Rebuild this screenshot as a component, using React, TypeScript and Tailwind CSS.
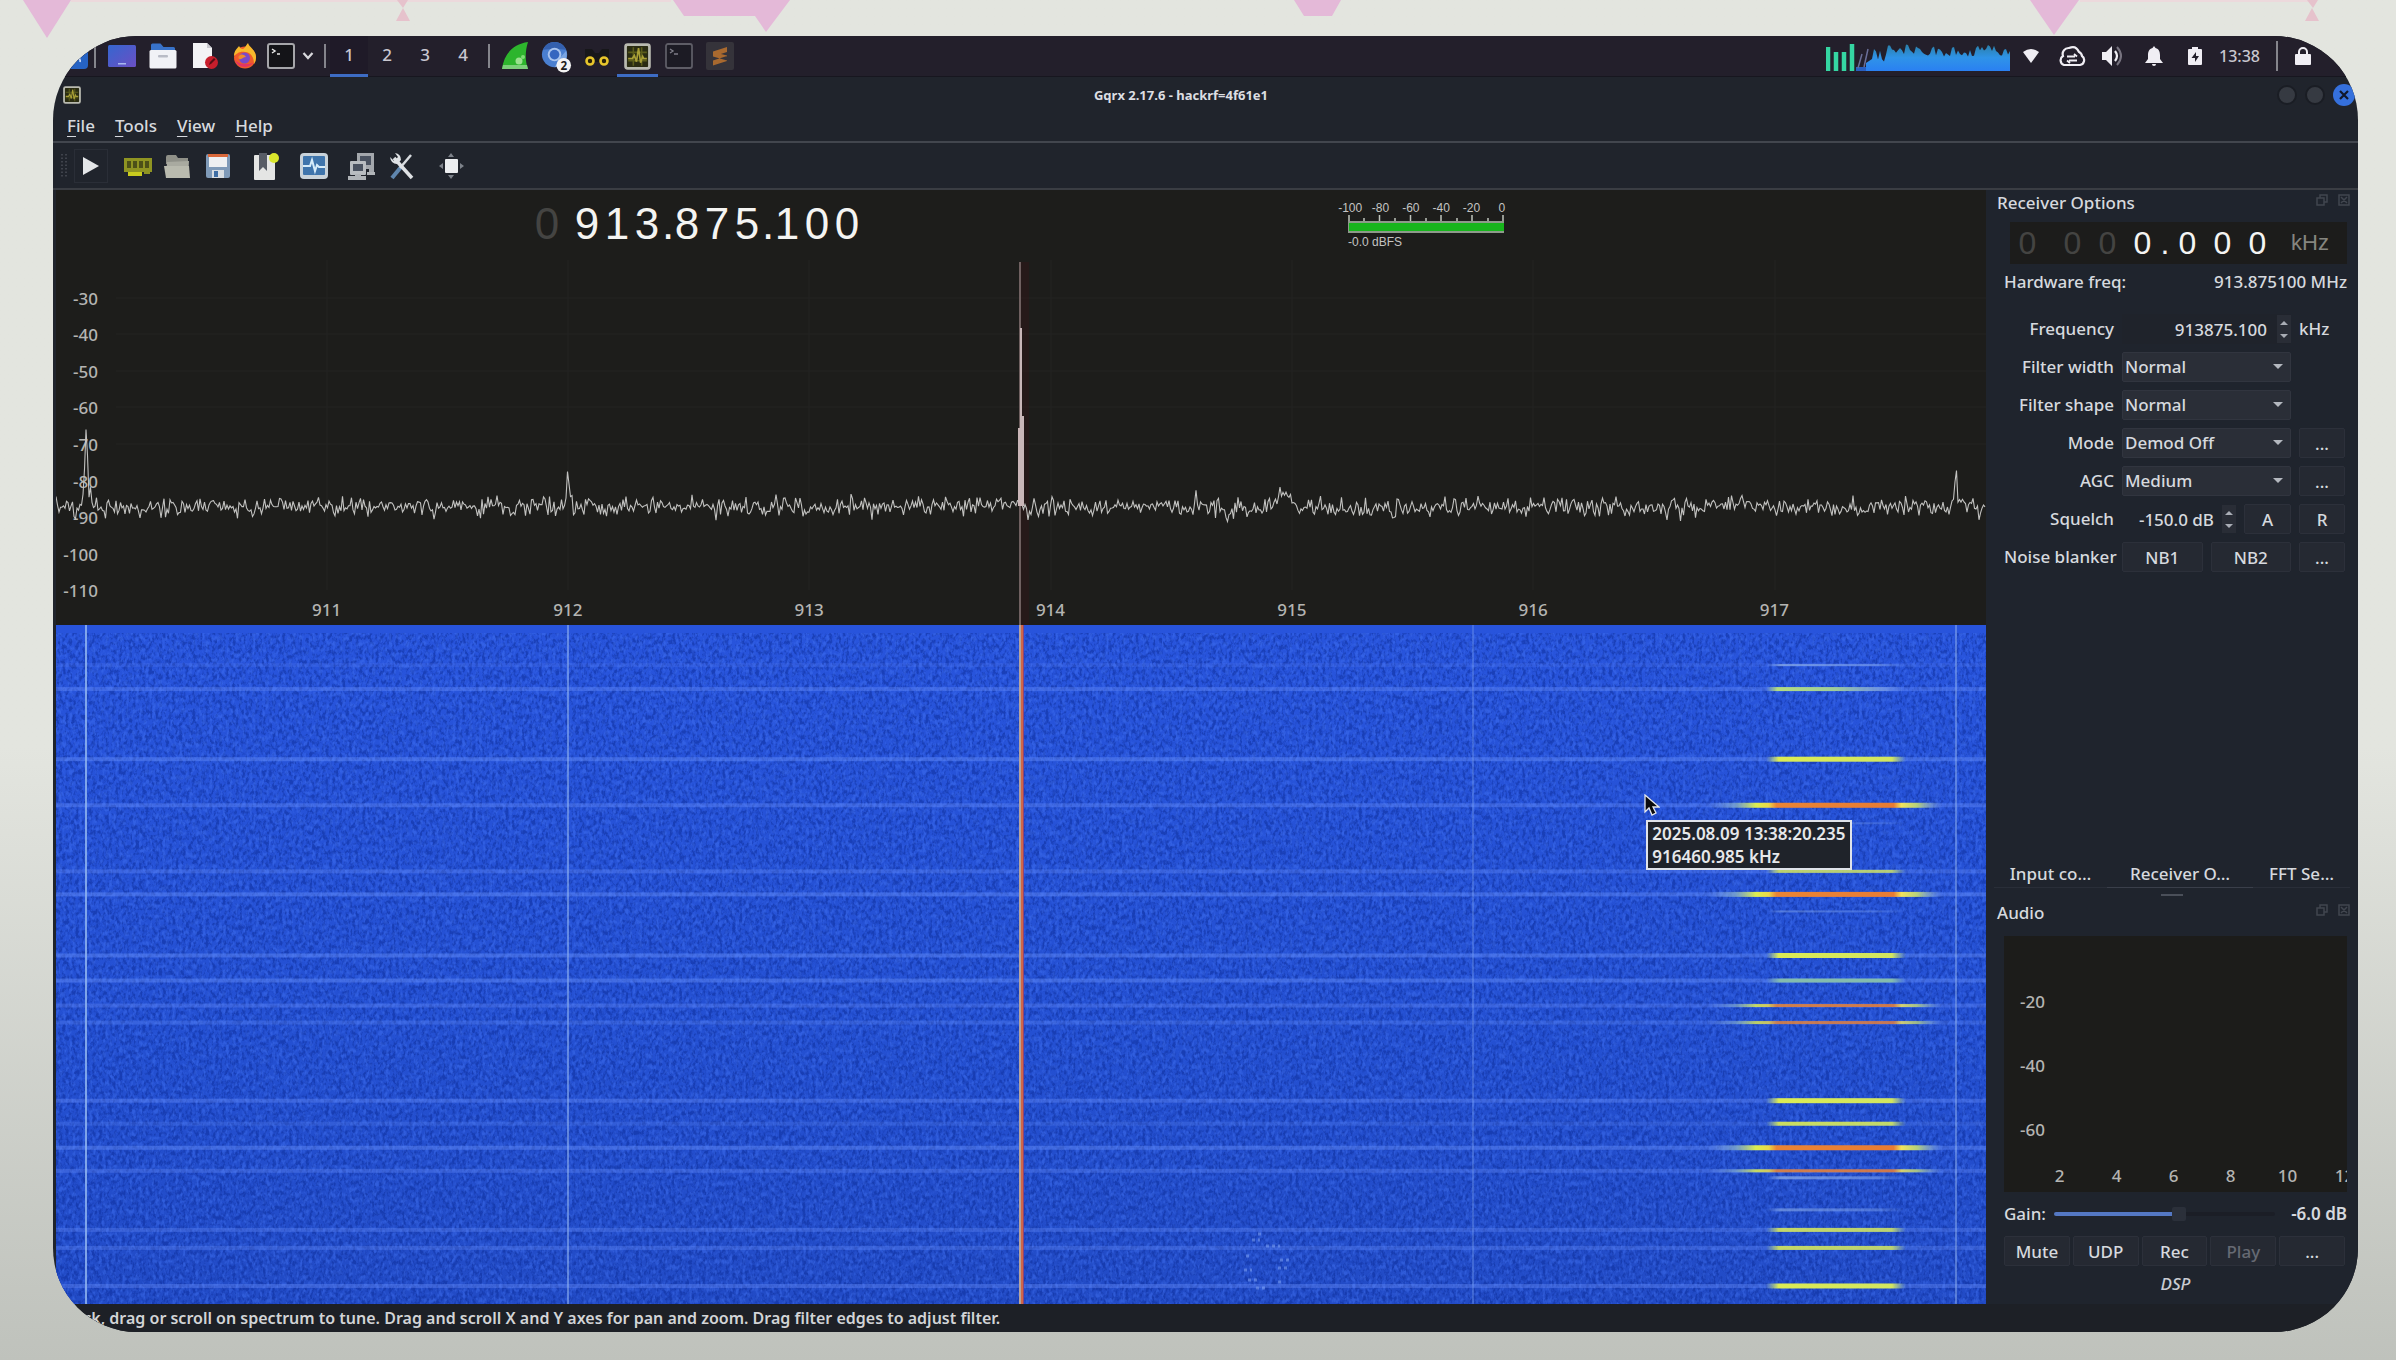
import { ReactNode, useState } from "react";
import clsx from "clsx";

interface Burst {
  y: number;
  h: number;
  kind: "weak" | "fade" | "green" | "yellow" | "orange";
  opacity?: number;
  line?: number;
}

const BURSTS: Burst[] = [
  { y: 40, h: 2, kind: "weak", line: 0.14 },
  { y: 64, h: 4, kind: "fade", line: 0.35 },
  { y: 134, h: 5, kind: "yellow", line: 0.4 },
  { y: 180, h: 5, kind: "orange", line: 0.35 },
  { y: 198, h: 2, kind: "weak", opacity: 0.5 },
  { y: 246, h: 3, kind: "yellow", opacity: 0.8, line: 0.3 },
  { y: 269, h: 5, kind: "orange", line: 0.4 },
  { y: 286, h: 2, kind: "weak", opacity: 0.6 },
  { y: 330, h: 5, kind: "yellow", line: 0.4 },
  { y: 355, h: 4, kind: "green", line: 0.4 },
  { y: 380, h: 3, kind: "orange", opacity: 0.85, line: 0.3 },
  { y: 397, h: 3, kind: "orange", opacity: 0.8, line: 0.25 },
  { y: 475, h: 5, kind: "yellow", line: 0.35 },
  { y: 498, h: 4, kind: "yellow", opacity: 0.9, line: 0.2 },
  { y: 522, h: 5, kind: "orange", line: 0.4 },
  { y: 545, h: 3, kind: "orange", opacity: 0.85, line: 0.3 },
  { y: 552, h: 3, kind: "weak" },
  { y: 584, h: 3, kind: "weak", opacity: 0.8 },
  { y: 604, h: 4, kind: "yellow", opacity: 0.85, line: 0.3 },
  { y: 622, h: 4, kind: "yellow", opacity: 0.85, line: 0.3 },
  { y: 660, h: 5, kind: "yellow", line: 0.35 },
];

const FILLS = {
  weak: "url(#weak)",
  fade: "url(#fade)",
  green: "url(#green)",
  yellow: "url(#yellow)",
  orange: "url(#orange)",
};

const DB_LABELS = [-30, -40, -50, -60, -70, -80, -90, -100, -110];
const MHZ_LABELS = [911, 912, 913, 914, 915, 916, 917];

function makeRandom(seed: number) {
  let s = seed;
  return () => {
    s = (s * 16807) % 2147483647;
    return s / 2147483647;
  };
}

// noise floor with a few narrow carriers on top
function tracePath() {
  const rnd = makeRandom(77);
  const peaks: [number, number, number][] = [
    [30, 78, 2],
    [512, 38, 2],
    [1228, 20, 5],
    [1900, 38, 2],
  ];
  let d = "";
  let drift = 0;
  for (let x = 0; x <= 1930; x += 1.5) {
    drift = drift * 0.6 + (rnd() - 0.5) * 5;
    let y = 317 + drift + (rnd() + rnd() + rnd() - 1.5) * 9;
    if (rnd() > 0.97) y += (rnd() - 0.5) * 16;
    for (const [px, h, w] of peaks) {
      const dist = Math.abs(x - px);
      if (dist < w) y -= h * (1 - dist / w / 2);
      else if (dist < w + 3) y -= 10;
    }
    d += `${x === 0 ? "M" : "L"}${x} ${y.toFixed(1)}`;
  }
  return d;
}

function loadPath() {
  const rnd = makeRandom(9);
  let d = "M10 30V22L16 18";
  for (let x = 18; x <= 154; x += 2) {
    const base = x < 32 ? 15 : 10;
    d += `L${x} ${(base - 7 + rnd() * 13).toFixed(1)}`;
  }
  return d + "V30Z";
}

const TRACE = tracePath();
const LOAD = loadPath();

function Divider({ className }: { className?: string }) {
  return <div className={clsx("h-6 w-0.5 shrink-0 bg-[#85858c]", className)} />;
}

function TaskButton({ label, active, children }: { label: string; active?: boolean; children: ReactNode }) {
  return (
    <button
      aria-label={label}
      className={clsx(
        "flex h-[41px] w-[41px] shrink-0 items-center justify-center border-y-[3px] border-transparent",
        active && "border-b-[#3d6cc4]"
      )}
    >
      {children}
    </button>
  );
}

function GqrxIcon({ className }: { className: string }) {
  return (
    <svg viewBox="0 0 26 26" className={className}>
      <rect x="1.5" y="1.5" width="23" height="23" rx="2" fill="#2a2c12" stroke="#b9bab0" strokeWidth="2.6" />
      <path d="M4 9h18M4 17h18M9 4v18M17 4v18" stroke="#5c5e1c" strokeWidth="1.5" />
      <path d="M4 15h4l2-3 2 6 2-13 2 14 2-6 1 2h3" stroke="#a89f36" strokeWidth="1.6" fill="none" />
    </svg>
  );
}

function Taskbar() {
  const [desk, setDesk] = useState(1);
  return (
    <div className="flex h-[41px] shrink-0 items-center border-b border-[#17161f] bg-[#231f2b]">
      <button aria-label="Applications" className="ml-[9px] shrink-0">
        <svg viewBox="0 0 26 26" className="h-[26px] w-[26px]">
          <rect width="26" height="26" rx="4" fill="#2663c4" />
          <path d="M6 8c6-2 10 0 11 4M10 12c4-1 9 1 8 7" stroke="#dfe9ff" strokeWidth="1.6" fill="none" />
        </svg>
      </button>
      <Divider className="mr-[5px] ml-1.5" />
      <TaskButton label="Show desktop">
        <svg viewBox="0 0 28 22" className="h-[22px] w-[28px]">
          <defs>
            <linearGradient id="desk" x1="0" y1="0" x2="1" y2="1">
              <stop offset="0" stopColor="#3566cf" />
              <stop offset="1" stopColor="#6b4fc4" />
            </linearGradient>
          </defs>
          <rect width="28" height="22" rx="1.5" fill="url(#desk)" />
          <rect x="10" y="18" width="8" height="1.5" fill="#a9b8f0" />
        </svg>
      </TaskButton>
      <TaskButton label="Files">
        <svg viewBox="0 0 28 26" className="h-[26px] w-[28px]">
          <path d="M2 2q0-1.500 1.500-1.500h8l3 3.500h10q1.500 0 1.500 1.500V12H2z" fill="#3872c9" />
          <rect x="0.500" y="7" width="27" height="18.500" rx="1.500" fill="#f1f2f6" />
          <rect x="9" y="12" width="10" height="2.500" rx="1" fill="#b9bcc6" />
        </svg>
      </TaskButton>
      <TaskButton label="Text editor">
        <svg viewBox="0 0 28 28" className="h-7 w-7">
          <path d="M3 1h14l5 5v20H3z" fill="#f3f3f5" />
          <path d="M17 1v5h5z" fill="#c9c9cf" />
          <circle cx="21.500" cy="20.500" r="6.500" fill="#c81e2c" />
          <path d="M19 23l1-3 4-4 1.500 1.500-4 4z" fill="#5a0d14" />
        </svg>
      </TaskButton>
      <TaskButton label="Firefox">
        <svg viewBox="0 0 28 28" className="h-7 w-7">
          <circle cx="14" cy="15.500" r="11" fill="#ef5a2b" />
          <path d="M3 14C3 8 7 6 8 4c1 2 2 3 4 3 2-1 3-4 5-6 1 4 8 7 8 14a11 11 0 0 1-2 7c0-6-3-12-9-12-6-1-8 2-11 4z" fill="#f7b92c" />
          <circle cx="13.500" cy="16" r="5.500" fill="#7b49c9" />
          <path d="M8 17c3 1 4-2 7-2-1-2-4-3-6-2-2 1-2 3-1 4z" fill="#f28a2a" />
          <path d="M4 18c2 7 12 10 18 3-3 1-5 1-8 1-5 0-8-2-10-4z" fill="#e63462" />
        </svg>
      </TaskButton>
      <button aria-label="Terminal" className="flex w-8 shrink-0 justify-center">
        <svg viewBox="0 0 28 26" className="h-[26px] w-7">
          <rect x="1" y="1" width="26" height="24" rx="2" fill="#141418" stroke="#a6a6aa" strokeWidth="2" />
          <path d="M5 6l3 2-3 2M10 11h3" stroke="#e6e6e6" strokeWidth="1.500" fill="none" />
        </svg>
      </button>
      <button aria-label="More terminals" className="flex w-[22px] shrink-0 justify-center">
        <svg viewBox="0 0 12 10" className="h-2.5 w-3">
          <path d="M1.500 2L6 7l4.500-5" stroke="#d8d8dc" strokeWidth="2.200" fill="none" />
        </svg>
      </button>
      <Divider className="mr-1 ml-[5px]" />
      {[1, 2, 3, 4].map((n) => (
        <button
          key={n}
          onClick={() => setDesk(n)}
          className={clsx(
            "h-[41px] w-[38px] shrink-0 border-y-[3px] border-transparent pb-1 leading-none text-[#c9c7d0]",
            desk === n && "border-b-[#3d6cc4]! bg-[#1f1a28]"
          )}
        >
          {n}
        </button>
      ))}
      <Divider className="mr-1 ml-1.5" />
      <TaskButton label="Wireshark">
        <svg viewBox="0 0 28 28" className="h-7 w-7">
          <path d="M1 27C3 12 12 2 27 0c-3 9-3 19 0 27z" fill="#2db52d" />
          <path d="M1 27l1-4h24l1 4z" fill="#7ccf7a" />
          <circle cx="18" cy="19" r="3.500" fill="#9be08f" />
          <circle cx="22" cy="15" r="2" fill="#7fdc76" />
        </svg>
      </TaskButton>
      <TaskButton label="Chromium">
        <svg viewBox="0 0 34 34" className="h-[33px] w-[33px]">
          <circle cx="16" cy="15" r="13" fill="#4a7fd0" />
          <path d="M4 10A13 13 0 0 1 28 10L16 9z" fill="#3460ae" />
          <path d="M28 11a13 13 0 0 1-12 17l6-10z" fill="#7aa5e2" />
          <circle cx="16" cy="15" r="7" fill="#a9c4ee" />
          <circle cx="16" cy="15" r="5" fill="#3566c0" />
          <circle cx="25.500" cy="26" r="7.500" fill="#f3f3f3" />
          <text x="25.500" y="30.500" textAnchor="middle" fontSize="12" fontWeight="700" fill="#1b1b1b">
            2
          </text>
        </svg>
      </TaskButton>
      <TaskButton label="Binoculars">
        <svg viewBox="0 0 28 22" className="mt-1 h-[22px] w-7">
          <path d="M2 2h7l3 4h4l3-4h7v13H2z" fill="#17171a" />
          <circle cx="7" cy="14" r="3.500" fill="#28210a" stroke="#e8c62c" strokeWidth="2.600" />
          <circle cx="21" cy="14" r="3.500" fill="#28210a" stroke="#e8c62c" strokeWidth="2.600" />
        </svg>
      </TaskButton>
      <TaskButton label="Gqrx" active>
        <GqrxIcon className="h-[27px] w-[27px]" />
      </TaskButton>
      <TaskButton label="Terminal window">
        <svg viewBox="0 0 28 26" className="h-[26px] w-7">
          <rect x="1" y="1" width="26" height="24" rx="2" fill="#1c1b24" stroke="#5e5d66" strokeWidth="1.800" />
          <path d="M5 6l3 2-3 2M9 11h4" stroke="#7d7c86" strokeWidth="1.400" fill="none" />
        </svg>
      </TaskButton>
      <TaskButton label="Sublime Text">
        <svg viewBox="0 0 28 28" className="h-7 w-7">
          <rect width="28" height="28" rx="2" fill="#35333a" />
          <path d="M21 5L7 9.500v5l14-4.500zM7 14.500l14 4V13.500L7 10zM21 14v5L7 23.500v-5z" fill="#a8692f" />
        </svg>
      </TaskButton>

      <div className="ml-auto flex items-center text-[#f0eef4]">
        <svg viewBox="0 0 184 30" className="h-[30px] w-[184px] self-end">
          <path d="M2 6v24M10 11v19M18 11v19M26 3v27" stroke="#35d6a2" strokeWidth="4.500" />
          <svg x="30" width="154" height="30" viewBox="0 0 154 30">
            <defs>
              <linearGradient id="load" x1="0" y1="0" x2="0" y2="1">
                <stop offset="0" stopColor="#2a7fa8" />
                <stop offset="0.5" stopColor="#2f93e8" />
                <stop offset="1" stopColor="#2a80f2" />
              </linearGradient>
            </defs>
            <path d="M0 30V26h154v4z" fill="#2a5fc0" />
            <path d={LOAD} fill="url(#load)" />
            <path d="M2 27l4-14M8 26l4-18" stroke="#6a6f98" strokeWidth="1.500" />
          </svg>
        </svg>
        <div className="flex w-[41px] justify-center">
          <svg viewBox="0 0 16 14" className="h-3.5 w-4">
            <path d="M0 3Q8-3 16 3L8 14z" fill="currentColor" />
          </svg>
        </div>
        <div className="flex w-[41px] justify-center">
          <svg viewBox="0 0 28 22" className="h-[22px] w-7" fill="none" stroke="currentColor" strokeWidth="2.200">
            <path d="M6 20a5 5 0 0 1-1-9 6 6 0 0 1 6-8q7-3 10 4a5 5 0 0 1 3 4 5 5 0 0 1-2 9z" />
            <path d="M9 11.500h8M16 9l3 2.500M19 15.500h-8M12 18l-3-2.500" strokeWidth="1.800" />
          </svg>
        </div>
        <div className="flex w-[41px] justify-center">
          <svg viewBox="0 0 22 20" className="h-5 w-[22px]">
            <path d="M0 6h4l6-6v20l-6-6H0z" fill="currentColor" />
            <path d="M13 5q4 5 0 10" stroke="currentColor" strokeWidth="2.200" fill="none" />
            <path d="M15 1q8 9 0 18" stroke="#77737f" strokeWidth="2" fill="none" />
          </svg>
        </div>
        <div className="flex w-[41px] justify-center">
          <svg viewBox="0 0 18 20" className="h-5 w-[18px]">
            <path d="M9 0l1.500 2C14 3 15 6 15 9v4l3 4H0l3-4V9c0-3 1-6 4.500-7zM7 18h4a2 2 0 0 1-4 0z" fill="currentColor" />
          </svg>
        </div>
        <div className="flex w-[41px] justify-center">
          <svg viewBox="0 0 14 18" className="h-[18px] w-3.5">
            <path d="M4 0h6v2h3q1 0 1 1v14q0 1-1 1H1q-1 0-1-1V3q0-1 1-1h3z" fill="currentColor" />
            <path d="M8 5l-4.500 6H7v4l4-6H8z" fill="#231f2b" />
          </svg>
        </div>
        <time className="ml-1 text-base leading-none text-[#c9c7d0]">13:38</time>
        <div className="mr-[17px] ml-4 h-[30px] w-0.5 bg-[#85858c]" />
        <svg viewBox="0 0 16 18" className="mr-[47px] h-[18px] w-4">
          <path d="M4 8V5a4 4 0 0 1 8 0v3" stroke="currentColor" strokeWidth="2" fill="none" />
          <rect y="7" width="16" height="11" rx="1" fill="currentColor" />
        </svg>
      </div>
    </div>
  );
}

function TitleBar() {
  return (
    <div className="flex h-9 shrink-0 items-center pl-[10px]">
      <GqrxIcon className="h-[18px] w-[18px]" />
      <h1 className="flex-1 pl-1 text-center text-[13px] leading-none font-bold text-[#dcdee2]">Gqrx 2.17.6 - hackrf=4f61e1</h1>
      <div className="flex items-center gap-2 pr-[3px]">
        <button aria-label="Minimize" className="h-5 w-5 rounded-full border-2 border-[#1a1d24] bg-[#363a42]" />
        <button aria-label="Maximize" className="h-5 w-5 rounded-full border-2 border-[#1a1d24] bg-[#363a42]" />
        <button aria-label="Close" className="flex h-[22px] w-[22px] items-center justify-center rounded-full bg-[#3570dc]">
          <svg viewBox="0 0 10 10" className="h-2.5 w-2.5">
            <path d="M1 1l8 8M9 1L1 9" stroke="#10182c" strokeWidth="2.200" />
          </svg>
        </button>
      </div>
    </div>
  );
}

function MenuBar() {
  return (
    <nav className="flex h-[30px] shrink-0 items-center gap-5 border-b-2 border-[#42464e] pb-1 pl-[14px] text-[#d6d9de]">
      {["File", "Tools", "View", "Help"].map((m) => (
        <button key={m} className="leading-none">
          <span className="underline underline-offset-4">{m[0]}</span>
          {m.slice(1)}
        </button>
      ))}
    </nav>
  );
}

function Tool({ label, className, children }: { label: string; className?: string; children: ReactNode }) {
  return (
    <button aria-label={label} className={clsx("flex h-8 w-10 shrink-0 items-center justify-center", className)}>
      <svg viewBox="0 0 28 28" className="h-7 w-7">
        {children}
      </svg>
    </button>
  );
}

function Toolbar() {
  return (
    <div className="flex h-[47px] shrink-0 items-center border-b-2 border-[#3a3d43] pl-2">
      <svg viewBox="0 0 6 24" className="h-6 w-1.5">
        <path d="M1 0v24M5 0v24" stroke="#4a4e57" strokeWidth="1.500" strokeDasharray="1.500 2" />
      </svg>
      <button aria-label="Start DSP" className="ml-[7px] flex h-[34px] w-[34px] items-center justify-center border border-[#2a2e37]">
        <svg viewBox="0 0 16 18" className="h-[18px] w-4">
          <path d="M0 0l16 9-16 9z" fill="#e4e6e8" />
        </svg>
      </button>
      <Tool label="Configure I/O" className="ml-[10px]">
        <rect x="0" y="6" width="28" height="14" fill="#8f9422" />
        <path d="M3 9h4v7H3zM9 9h4v7H9zM15 9h4v7h-4zM21 9h4v7h-4z" fill="#4c5018" />
        <path d="M4 20h14v4H4z" fill="#c9cc1e" />
        <path d="M20 20h6v2h-6z" fill="#8f9422" />
      </Tool>
      <Tool label="Load settings">
        <path d="M2 5q0-2 2-2h8l2 3h10v6H2z" fill="#8f9088" />
        <path d="M3 10l22-1-1 17H2z" fill="#a9aaa0" />
        <path d="M0 14h25l1 12H2z" fill="#b9baae" />
      </Tool>
      <Tool label="Save settings">
        <rect x="2" y="2" width="24" height="24" rx="2" fill="#7f9ab8" />
        <rect x="4" y="2" width="20" height="3" fill="#d9683a" />
        <rect x="5" y="5" width="18" height="10" fill="#eef0f2" />
        <rect x="8" y="18" width="12" height="8" fill="#d8dde2" />
        <rect x="10" y="19" width="4" height="6" fill="#3f6ea4" />
      </Tool>
      <Tool label="Bookmarks" className="ml-2">
        <rect x="2" y="3" width="21" height="25" rx="1" fill="#e4e5e4" />
        <path d="M7 1h8v18l-4-4-4 4z" fill="#575c66" />
        <circle cx="22" cy="6" r="5" fill="#d9e62c" />
      </Tool>
      <Tool label="Spectrum" className="ml-2">
        <rect x="0" y="1" width="28" height="26" rx="4" fill="#c9d3da" />
        <rect x="3" y="4" width="22" height="19" rx="1" fill="#3f75ac" />
        <path d="M3 14h7l2-6 3 11 2-6 2 2h6" stroke="#d6ecfa" strokeWidth="2" fill="none" />
      </Tool>
      <Tool label="Remote control" className="ml-2">
        <path d="M9 1h17v20h-5v-4H9z" fill="#a3a7ac" />
        <rect x="12" y="4" width="11" height="9" fill="#4a5260" />
        <rect x="2" y="9" width="16" height="14" rx="1" fill="#b9bdc1" />
        <rect x="5" y="12" width="10" height="7" fill="#4a5260" />
        <path d="M0 24h18v4H0zM19 20h8v3h-8zM7 22h6v3H7z" fill="#b0b4b8" />
      </Tool>
      <Tool label="Settings">
        <path d="M4 26L13 15" stroke="#5f86ae" strokeWidth="4" />
        <path d="M12 16L23 3" stroke="#d8dce0" strokeWidth="2.500" />
        <path d="M6 6l18 20" stroke="#dfe2e5" strokeWidth="3.500" />
        <path d="M2 5l4 4 4-4-3-4q6 1 6 7l-4 4Q3 12 2 5z" fill="#dfe2e5" />
      </Tool>
      <Tool label="Fullscreen" className="ml-[9px]">
        <rect x="8" y="7" width="13" height="14" rx="1" fill="#eceef0" />
        <path d="M14 1l3 4h-6zM14 27l3-4h-6zM2 14l4-3v6zM27 14l-4-3v6z" fill="#7d828a" />
      </Tool>
    </div>
  );
}

function Digits({ dim, value, cell, dot }: { dim: string; value: string; cell: string; dot: string }) {
  return (
    <>
      {(dim + value).split("").map((c, i) => (
        <span
          key={i}
          className={clsx("shrink-0 text-center", c === "." || c === " " ? dot : cell, i < dim.length ? "text-[#444442]" : "text-[#f4f4f2]")}
        >
          {c}
        </span>
      ))}
    </>
  );
}

function SignalMeter() {
  return (
    <div className="w-[182px] font-['Liberation_Sans',sans-serif] text-xs leading-none text-[#c4c4c2]">
      <div className="grid grid-cols-6 text-center">
        {[-100, -80, -60, -40, -20, 0].map((v) => (
          <span key={v}>{v}</span>
        ))}
      </div>
      <div className="px-[13px]">
        <svg viewBox="0 0 156 20" className="h-5 w-full">
          <path d="M1 1v8M31.500 1v8M62.500 1v8M93 1v8M124 1v8M155 1v8M16 4v5M47 4v5M78 4v5M109 4v5M140 4v5" stroke="#bfc4bc" strokeWidth="1.500" />
          <rect y="7" width="156" height="12" fill="#8d9a8a" />
          <rect x="1" y="9" width="155" height="8" fill="#17b51c" />
        </svg>
        <p className="mt-0.5">-0.0 dBFS</p>
      </div>
    </div>
  );
}

function Spectrum() {
  return (
    <section className="relative flex h-[435px] shrink-0 flex-col bg-[#1d1d1b]">
      <svg viewBox="0 0 1930 435" preserveAspectRatio="none" className="absolute inset-0 h-full w-full">
        <path
          d="M60 108H1930M60 144H1930M60 181H1930M60 217H1930M60 254H1930M271 70V400M512 70V400M753 70V400M995 70V400M1236 70V400M1477 70V400M1719 70V400"
          stroke="#222221"
          strokeWidth="1.500"
        />
      </svg>
      <div className="flex pt-3 pl-[476px]">
        <div className="flex h-[44px] items-center font-['Liberation_Sans',sans-serif] text-[44px] leading-none">
          <Digits dim="0 " value="913.875.100" cell="w-[30px]" dot="w-[10px]" />
        </div>
        <div className="ml-[473px]">
          <SignalMeter />
        </div>
      </div>
      <div className="mt-auto mb-4 grid h-[329px] w-[42px] grid-rows-9 items-center text-right leading-none text-[#b4b4b2]">
        {DB_LABELS.map((v) => (
          <span key={v}>{v}</span>
        ))}
      </div>
      <div className="absolute inset-x-0 bottom-[5px] grid grid-cols-7 pr-[91px] pl-[150px] text-center leading-5 text-[#b4b4b2]">
        {MHZ_LABELS.map((v) => (
          <span key={v}>{v}</span>
        ))}
      </div>
      <svg viewBox="0 0 1930 435" preserveAspectRatio="none" className="absolute inset-0 h-full w-full">
        <rect x="965" y="72" width="8" height="363" fill="#3c1016" opacity="0.3" />
        <rect x="963" y="72" width="2" height="363" fill="#6f6060" />
        <path d={TRACE} fill="none" stroke="#c2c2c0" strokeWidth="1.100" />
        <path d="M962 316V238H964V138H966V226H968V316z" fill="#c9b6b8" />
      </svg>
    </section>
  );
}

function Waterfall() {
  return (
    <section className="relative min-h-0 flex-1 overflow-hidden bg-[#2450cf]">
      <svg viewBox="0 0 1930 678" preserveAspectRatio="none" className="h-full w-full">
        <defs>
          <filter id="noise" x="0" y="0" width="100%" height="100%" colorInterpolationFilters="sRGB">
            <feTurbulence type="fractalNoise" baseFrequency="0.3 0.2" numOctaves="3" seed="4" />
            <feColorMatrix values="0 0 0 0 0.06  0 0 0 0 0.19  0 0 0 0 0.62  4.5 0 0 0 -2" />
          </filter>
          <filter id="noiseLight" x="0" y="0" width="100%" height="100%" colorInterpolationFilters="sRGB">
            <feTurbulence type="fractalNoise" baseFrequency="0.3 0.18" numOctaves="2" seed="11" />
            <feColorMatrix values="0 0 0 0 0.27  0 0 0 0 0.46  0 0 0 0 0.96  4 0 0 0 -1.9" />
          </filter>
          <linearGradient id="shade" x1="0" y1="0" x2="0" y2="1">
            <stop offset="0" stopColor="#2854dc" />
            <stop offset="0.6" stopColor="#2450d2" />
            <stop offset="1" stopColor="#224bc6" />
          </linearGradient>
          <linearGradient id="weak" gradientUnits="userSpaceOnUse" x1="1710" y1="0" x2="1850" y2="0">
            <stop offset="0" stopColor="#7ba0ee" stopOpacity="0" />
            <stop offset="0.1" stopColor="#86a8e6" stopOpacity="0.8" />
            <stop offset="0.8" stopColor="#7ba0ee" stopOpacity="0.6" />
            <stop offset="1" stopColor="#7ba0ee" stopOpacity="0" />
          </linearGradient>
          <linearGradient id="fade" gradientUnits="userSpaceOnUse" x1="1710" y1="0" x2="1850" y2="0">
            <stop offset="0" stopColor="#a8d090" stopOpacity="0" />
            <stop offset="0.08" stopColor="#b4dc80" />
            <stop offset="0.5" stopColor="#9fcb9a" />
            <stop offset="0.85" stopColor="#86a8e6" stopOpacity="0.6" />
            <stop offset="1" stopColor="#7ba0ee" stopOpacity="0" />
          </linearGradient>
          <linearGradient id="green" gradientUnits="userSpaceOnUse" x1="1710" y1="0" x2="1850" y2="0">
            <stop offset="0" stopColor="#84b8b4" stopOpacity="0" />
            <stop offset="0.1" stopColor="#84bcae" />
            <stop offset="0.9" stopColor="#84bcae" />
            <stop offset="1" stopColor="#84b8b4" stopOpacity="0" />
          </linearGradient>
          <linearGradient id="yellow" gradientUnits="userSpaceOnUse" x1="1710" y1="0" x2="1850" y2="0">
            <stop offset="0" stopColor="#b8dc80" stopOpacity="0" />
            <stop offset="0.09" stopColor="#dcec54" />
            <stop offset="0.9" stopColor="#d2e660" />
            <stop offset="1" stopColor="#b8dc80" stopOpacity="0" />
          </linearGradient>
          <linearGradient id="orange" gradientUnits="userSpaceOnUse" x1="1640" y1="0" x2="1900" y2="0">
            <stop offset="0.04" stopColor="#8fb0f0" stopOpacity="0" />
            <stop offset="0.15" stopColor="#8fb8c0" stopOpacity="0.6" />
            <stop offset="0.23" stopColor="#dcee50" />
            <stop offset="0.28" stopColor="#ecd848" />
            <stop offset="0.31" stopColor="#ea8434" />
            <stop offset="0.76" stopColor="#e87c34" />
            <stop offset="0.79" stopColor="#f2e45c" />
            <stop offset="0.85" stopColor="#c4dc70" stopOpacity="0.9" />
            <stop offset="0.95" stopColor="#8fb0f0" stopOpacity="0" />
          </linearGradient>
        </defs>
        <rect width="1930" height="678" fill="url(#shade)" />
        <rect y="8" width="1930" height="670" filter="url(#noise)" opacity="0.55" />
        <rect y="8" width="1930" height="670" filter="url(#noiseLight)" opacity="0.4" />
        {BURSTS.map((b) => (
          <g key={b.y}>
            {b.line && <rect y={b.y - 2} width="1930" height="4" fill="#6f96ff" opacity={b.line} />}
            <rect x="1640" y={b.y - b.h / 2} width="262" height={b.h} fill={FILLS[b.kind]} opacity={b.opacity ?? 1} />
          </g>
        ))}
        <rect x="29" width="2" height="678" fill="#8fb4f0" opacity="0.85" />
        <rect x="511" width="2" height="678" fill="#8fb0ee" opacity="0.6" />
        <rect x="1416" width="2" height="678" fill="#7ca0ee" opacity="0.35" />
        <rect x="1899" width="2" height="678" fill="#8fb0ee" opacity="0.5" />
        <rect x="963" width="2" height="678" fill="#b5a39e" />
        <rect x="965" width="2" height="678" fill="#cf6648" />
        <rect x="967" width="1" height="678" fill="#8a4478" />
        <path
          d="M1196 614h8M1202 608h4M1210 620h14M1190 630h6M1224 634h12M1188 644h8M1222 642h10M1192 654h12M1222 656h6M1200 662h10"
          stroke="#7fa2f4"
          strokeWidth="3"
          strokeDasharray="3 3"
          opacity="0.55"
        />
      </svg>
      <div className="absolute top-[195px] left-[82.400%] border-2 border-[#dfe3ea] bg-[#1f232a] px-1 text-[17px] leading-[23px] font-semibold whitespace-nowrap text-[#e6e8ea]">
        <p>2025.08.09 13:38:20.235</p>
        <p>916460.985 kHz</p>
      </div>
      <svg viewBox="0 0 16 24" className="absolute top-[169px] left-[82.300%] h-6 w-4">
        <path d="M1 1v17l4-4 3 7 4-2-3-6h6z" fill="#0b0b0d" stroke="#e6e8ec" strokeWidth="1.300" />
      </svg>
    </section>
  );
}

function DockHeader({ title }: { title: string }) {
  return (
    <div className="flex h-6 items-center pr-2 pl-[11px] text-[#d6d9de]">
      <h2 className="flex-1 leading-none">{title}</h2>
      <div className="flex gap-[10px] pb-1">
        <button aria-label={`Float ${title}`}>
          <svg viewBox="0 0 12 12" className="h-3 w-3" fill="none" stroke="#41464f" strokeWidth="1.500">
            <path d="M1 4h7v7H1zM4 4V1h7v7H8" />
          </svg>
        </button>
        <button aria-label={`Close ${title}`}>
          <svg viewBox="0 0 12 12" className="h-3 w-3" fill="none" stroke="#41464f" strokeWidth="1.500">
            <path d="M1 1h10v10H1zM3 3l6 6M9 3L3 9" />
          </svg>
        </button>
      </div>
    </div>
  );
}

function PushButton({ children, className, disabled }: { children: ReactNode; className?: string; disabled?: boolean }) {
  return (
    <button
      disabled={disabled}
      className={clsx(
        "h-[30px] rounded-xs border border-[#2c303a] bg-[#252932] text-center leading-none text-[#d6d9de] disabled:text-[#666a73]",
        className
      )}
    >
      {children}
    </button>
  );
}

function Spinner() {
  return (
    <svg viewBox="0 0 14 28" className="h-7 w-3.5 shrink-0 bg-[#292d36]">
      <path d="M3 10l4-4 4 4z" fill="#a9adb5" />
      <path d="M3 19l4 4 4-4z" fill="#a9adb5" />
    </svg>
  );
}

function SelectBox({ id, options }: { id: string; options: string[] }) {
  return (
    <div className="relative">
      <select id={id} className="block h-[30px] w-full appearance-none rounded-xs border border-[#31353f] bg-[#2a2e37] pl-0.5 leading-7 text-[#d6d9de]">
        {options.map((o) => (
          <option key={o}>{o}</option>
        ))}
      </select>
      <svg viewBox="0 0 10 6" className="pointer-events-none absolute top-3 right-2 h-1.5 w-2.5">
        <path d="M0 0h10L5 5z" fill="#b4b8bf" />
      </svg>
    </div>
  );
}

function ReceiverOptions() {
  return (
    <section>
      <DockHeader title="Receiver Options" />
      <div className="mt-2 mr-[11px] ml-6 flex h-[42px] items-center bg-[#1c1c1b] font-['Liberation_Sans',sans-serif] text-[32px] leading-none">
        <Digits dim="0 00" value="0.000" cell="w-[35px]" dot="w-[10px]" />
        <span className="ml-4 text-[22px] text-[#85857f]">kHz</span>
      </div>
      <div className="mt-0.5 mr-[11px] ml-[18px] flex h-8 items-center justify-between text-[#d6d9de]">
        <span>Hardware freq:</span>
        <span>913.875100 MHz</span>
      </div>
      <div className="mt-4 ml-[18px] grid grid-cols-[110px_169px_46px] items-center gap-2 text-[#d6d9de]">
        <label htmlFor="freq" className="text-right">Frequency</label>
        <div className="flex h-[30px] items-center bg-[#1f232b]">
          <input id="freq" defaultValue="913875.100" className="w-full min-w-0 pr-[10px] text-right leading-none" />
          <Spinner />
        </div>
        <span>kHz</span>

        <label htmlFor="fwidth" className="text-right">Filter width</label>
        <SelectBox id="fwidth" options={["Normal", "Wide", "Narrow"]} />
        <span />

        <label htmlFor="fshape" className="text-right">Filter shape</label>
        <SelectBox id="fshape" options={["Normal", "Soft", "Sharp"]} />
        <span />

        <label htmlFor="mode" className="text-right">Mode</label>
        <SelectBox id="mode" options={["Demod Off", "AM", "Narrow FM"]} />
        <PushButton>...</PushButton>

        <label htmlFor="agc" className="text-right">AGC</label>
        <SelectBox id="agc" options={["Medium", "Fast", "Slow"]} />
        <PushButton>...</PushButton>

        <label htmlFor="squelch" className="text-right">Squelch</label>
        <div className="flex items-center">
          <input id="squelch" defaultValue="-150.0 dB" className="w-full min-w-0 pr-2 text-right leading-none" />
          <Spinner />
          <PushButton className="ml-2 w-[47px] shrink-0">A</PushButton>
        </div>
        <PushButton>R</PushButton>

        <span className="text-right whitespace-nowrap">Noise blanker</span>
        <div className="grid grid-cols-2 gap-2">
          <PushButton>NB1</PushButton>
          <PushButton>NB2</PushButton>
        </div>
        <PushButton>...</PushButton>
      </div>
    </section>
  );
}

function AudioDock() {
  const [gain, setGain] = useState(-6);
  const fill = ((gain + 80) / 130) * 100;
  return (
    <section>
      <DockHeader title="Audio" />
      <div className="mt-3 mr-[11px] ml-[18px] h-[256px] overflow-hidden bg-[#1c1c1a] pt-[33px] text-[#b4b4b2]">
        <div className="grid h-[192px] w-[41px] grid-rows-3 items-center text-right leading-none">
          <span>-20</span>
          <span>-40</span>
          <span>-60</span>
        </div>
        <div className="flex h-7 items-center pl-[27px] leading-none">
          {[2, 4, 6, 8, 10, 12].map((v) => (
            <span key={v} className="w-[57px] shrink-0 text-center">{v}</span>
          ))}
        </div>
      </div>
      <div className="mt-1 mr-[11px] ml-[18px] flex h-9 items-center text-[#d6d9de]">
        <label htmlFor="gain">Gain:</label>
        <input
          id="gain"
          type="range"
          min={-80}
          max={50}
          value={gain}
          onChange={(e) => setGain(Number(e.target.value))}
          style={{ backgroundImage: `linear-gradient(to right, #5478c4 ${fill}%, transparent ${fill}%)` }}
          className="ml-2 h-1 w-[221px] appearance-none rounded-full bg-[#1b1e26] [&::-webkit-slider-thumb]:h-3.5 [&::-webkit-slider-thumb]:w-3.5 [&::-webkit-slider-thumb]:appearance-none [&::-webkit-slider-thumb]:rounded-xs [&::-webkit-slider-thumb]:bg-[#2b303a]"
        />
        <span className="ml-auto font-semibold">{gain.toFixed(1)} dB</span>
      </div>
      <div className="mt-1 mr-[13px] ml-[18px] grid grid-cols-5 gap-[3px]">
        <PushButton>Mute</PushButton>
        <PushButton>UDP</PushButton>
        <PushButton>Rec</PushButton>
        <PushButton disabled>Play</PushButton>
        <PushButton>...</PushButton>
      </div>
      <p className="mt-1.5 pr-[11px] pl-[18px] text-center leading-6 text-[#c9ccd2] italic">DSP</p>
    </section>
  );
}

function Dock() {
  const tabs = ["Input co…", "Receiver O…", "FFT Se…"];
  return (
    <aside className="flex w-[372px] shrink-0 flex-col bg-[#1f242d]">
      <ReceiverOptions />
      <div role="tablist" className="mt-auto mr-2 ml-2 grid grid-cols-[113px_146px_1fr] text-[#d6d9de]">
        {tabs.map((t, i) => (
          <button
            key={t}
            role="tab"
            aria-selected={i === 1}
            className={clsx("h-7 border-b text-center leading-none", i === 1 ? "border-[#3a3f4a]" : "border-[#292e38]")}
          >
            {t}
          </button>
        ))}
      </div>
      <div className="mx-auto mt-1.5 mb-1 h-0.5 w-[22px] shrink-0 bg-[#4a4f59]" />
      <AudioDock />
      <div className="h-2 shrink-0" />
    </aside>
  );
}

export default function App() {
  return (
    <div className="flex h-screen flex-col overflow-hidden bg-linear-to-b from-[#e3e5df] from-55% to-[#bfc2bc] font-['Noto_Sans',sans-serif] text-[17px] font-medium">
      <svg viewBox="0 0 2396 36" className="h-9 w-full shrink-0 overflow-visible" fill="#e4b9d8">
        <rect x="71" width="600" height="2" fill="#ecd9dc" />
        <rect x="2080" width="230" height="2" fill="#ecd9dc" />
        <path d="M23 0h48L47 38z" />
        <path d="M673 0h117l-24 32-11-16h-71z" />
        <path d="M1294 0h47l-9 16h-28z" />
        <path d="M2030 0h49l-25 35z" />
        <path d="M397 0h11l-5 8zM396 21h14l-7-13zM2307 0h11l-5 8zM2305 21h14l-7-13z" fill="#e6c2cc" />
      </svg>
      <main className="mr-[38px] mb-[28px] ml-[53px] flex min-h-0 flex-1 flex-col overflow-hidden rounded-[84px] bg-[#20242c]">
        <Taskbar />
        <TitleBar />
        <MenuBar />
        <Toolbar />
        <div className="flex min-h-0 flex-1 pl-[3px]">
          <div className="flex min-w-0 flex-1 flex-col">
            <Spectrum />
            <Waterfall />
          </div>
          <Dock />
        </div>
        <footer className="flex h-7 shrink-0 items-center bg-[#1d2026] pl-[11px] text-base leading-none font-semibold text-[#d2d4d6]">
          Click, drag or scroll on spectrum to tune. Drag and scroll X and Y axes for pan and zoom. Drag filter edges to adjust filter.
        </footer>
      </main>
    </div>
  );
}
